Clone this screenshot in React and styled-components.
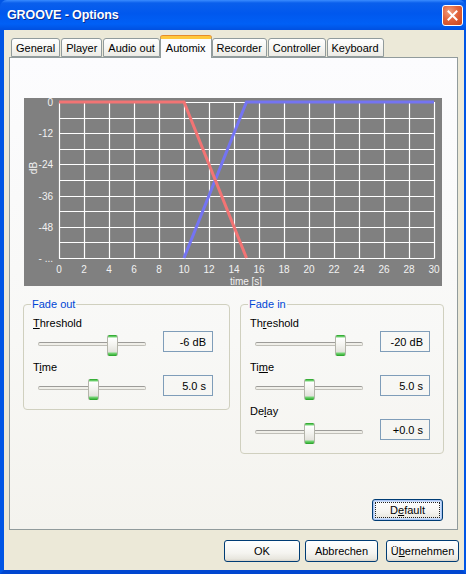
import React from "react";
import styled, { createGlobalStyle } from "styled-components";

const Global = createGlobalStyle`
  html, body { margin: 0; padding: 0; }
  body { width: 466px; height: 574px; overflow: hidden; background: #ffffff; }
  * { box-sizing: border-box; }
`;

const FONT = `"Liberation Sans", Arial, sans-serif`;

const Window = styled.div`
  width: 466px;
  height: 574px;
  display: flex;
  flex-direction: column;
  font-family: ${FONT};
  font-size: 11px;
  color: #000;
  background: #0055e5;
`;

const TitleBar = styled.div`
  height: 30px;
  flex: none;
  display: flex;
  align-items: center;
  padding: 0 3px 0 7px;
  border-radius: 7px 7px 0 0;
  background: linear-gradient(
    to bottom,
    #3a8cff 0%,
    #0a5fec 10%,
    #0058ee 45%,
    #0060f6 80%,
    #0050e0 100%
  );
`;

const Title = styled.div`
  flex: 1;
  color: #fff;
  font-weight: bold;
  font-size: 12.5px;
  letter-spacing: -0.1px;
  text-shadow: 1px 1px 0 #0a2a8c;
`;

const CloseButton = styled.div`
  width: 21px;
  height: 21px;
  border: 1px solid #fff;
  border-radius: 3px;
  background: radial-gradient(circle at 35% 30%, #f0a080 0%, #e2643c 45%, #c8441c 100%);
  display: flex;
  align-items: center;
  justify-content: center;
`;

const Frame = styled.div`
  flex: 1;
  display: flex;
  border-left: 4px solid #0055e5;
  border-right: 4px solid #0055e5;
  border-bottom: 4px solid #0046d0;
`;

const Client = styled.div`
  flex: 1;
  display: flex;
  flex-direction: column;
  background: #ece9d8;
  padding: 6px 6px 8px 5px;
`;

const TabStrip = styled.div`
  display: flex;
  align-items: flex-end;
  height: 21px;
  padding-left: 2px;
  gap: 1px;
  position: relative;
  z-index: 1;
`;

const Tab = styled.div`
  height: ${(p) => (p.$active ? "22px" : "19px")};
  margin-bottom: ${(p) => (p.$active ? "-1px" : "0")};
  margin-left: ${(p) => (p.$active ? "-1px" : "0")};
  margin-right: ${(p) => (p.$active ? "-1px" : "0")};
  padding: ${(p) => (p.$active ? "0 5px 2px" : "0 4px")};
  display: flex;
  align-items: center;
  border: 1px solid #919b9c;
  border-bottom: ${(p) => (p.$active ? "none" : "1px solid #919b9c")};
  border-top: ${(p) => (p.$active ? "3px solid #ffc83c" : "1px solid #919b9c")};
  border-radius: 3px 3px 0 0;
  background: ${(p) =>
    p.$active
      ? "#fcfcfe"
      : "linear-gradient(to bottom, #ffffff 0%, #f6f6f3 50%, #ecebe5 100%)"};
  box-shadow: ${(p) => (p.$active ? "0 -1px 0 #e68b2c" : "none")};
  white-space: nowrap;
`;

const Panel = styled.div`
  height: 473px;
  flex: none;
  display: flex;
  flex-direction: column;
  border: 1px solid #919b9c;
  background: linear-gradient(to bottom, #fcfcfe 0%, #f8f8f6 60%, #f4f3ee 100%);
  padding: 40px 13px 8px 14px;
`;

const ChartBox = styled.div`
  width: 418px;
  height: 188px;
  background: #808080;
  flex: none;
`;

const GroupsRow = styled.div`
  display: flex;
  align-items: flex-start;
  gap: 10px;
  margin: 12px 0 0 -1px;
`;

const Group = styled.fieldset`
  margin: 0;
  width: ${(p) => p.$w}px;
  border: 1px solid #d0d0bf;
  border-radius: 4px;
  padding: 6px 0 9px 9px;
  display: flex;
  flex-direction: column;
  gap: 5px;
`;

const Legend = styled.legend`
  color: #0046d5;
  padding: 0 1px;
  margin-left: -2px;
  line-height: 13px;
`;

const Control = styled.div`
  display: flex;
  flex-direction: column;
`;

const Label = styled.div`
  line-height: 13px;
  height: 13px;
`;

const SliderRow = styled.div`
  display: flex;
  align-items: flex-start;
  height: 26px;
  gap: 12px;
`;

const Slider = styled.div`
  width: 118px;
  height: 26px;
  position: relative;
  flex: none;
`;

const Track = styled.div`
  position: absolute;
  left: 5px;
  right: 5px;
  top: 12px;
  height: 4px;
  border: 1px solid #c0bfb8;
  border-top-color: #9d9c99;
  border-radius: 2px;
  background: #f0efe9;
`;

const Thumb = styled.div`
  position: absolute;
  top: 5px;
  width: 11px;
  height: 21px;
  border: 1px solid #b4b4aa;
  border-top: none;
  border-bottom: none;
  border-radius: 2px;
  background: linear-gradient(
    to bottom,
    #21a121 0px,
    #7bd87b 2px,
    #ffffff 3px,
    #f3f3ef 10px,
    #e3e2dc 17px,
    #7bd87b 18px,
    #21a121 21px
  );
`;

const ValueBox = styled.div`
  width: 50px;
  height: 21px;
  margin-top: 1px;
  flex: none;
  border: 1px solid #7f9db9;
  display: flex;
  align-items: center;
  justify-content: flex-end;
  padding-right: 6px;
  background: transparent;
`;

const Spacer = styled.div`
  flex: 1;
`;

const DefaultRow = styled.div`
  display: flex;
  justify-content: flex-end;
  padding-right: 1px;
`;

const Button = styled.div`
  width: ${(p) => p.$w}px;
  height: 22px;
  flex: none;
  margin-left: ${(p) => p.$ml || 0}px;
  position: relative;
  display: flex;
  align-items: center;
  justify-content: center;
  border: 1px solid #003c74;
  border-radius: 3px;
  background: linear-gradient(to bottom, #ffffff 0%, #f5f4f0 60%, #e8e6de 90%, #d6d0c5 100%);
  box-shadow: ${(p) =>
    p.$focus ? "inset 0 0 0 1px #aac4f2, inset 0 0 0 2px #cde0fb" : "none"};
  &::after {
    content: "";
    display: ${(p) => (p.$focus ? "block" : "none")};
    position: absolute;
    inset: 2px;
    border: 1px dotted #222;
  }
`;

const ButtonRow = styled.div`
  display: flex;
  justify-content: flex-end;
  margin: 10px -1px 0 0;
`;

function Chart() {
  const x0 = 35;
  const dx = 25;
  const y0 = 4;
  const dy = 15.6;
  const xs = Array.from({ length: 16 }, (_, i) => x0 + dx * i);
  const ys = Array.from({ length: 11 }, (_, j) => y0 + dy * j);
  const yLabels = ["0", "-12", "-24", "-36", "-48", "- ..."];
  const px = (t) => x0 + dx * (t / 2);
  return (
    <svg width="418" height="188" viewBox="0 0 418 188">
      <rect x="0" y="0" width="418" height="188" fill="#808080" />
      {xs.map((x, i) => (
        <line
          key={"v" + i}
          x1={Math.round(x) + 0.5}
          x2={Math.round(x) + 0.5}
          y1={y0}
          y2={160.5}
          stroke="#ffffff"
          strokeWidth="1.2"
        />
      ))}
      {ys.map((y, j) => (
        <line
          key={"h" + j}
          x1={x0}
          x2={410.5}
          y1={Math.round(y) + 0.5}
          y2={Math.round(y) + 0.5}
          stroke="#ffffff"
          strokeWidth="1.2"
        />
      ))}
      <polyline
        points={`${px(10)},160 ${px(15)},4 410,4`}
        fill="none"
        stroke="#7474f2"
        strokeWidth="3"
      />
      <polyline
        points={`${x0},4 ${px(10)},4 ${px(15)},160`}
        fill="none"
        stroke="#f27474"
        strokeWidth="3"
      />
      <g fill="#f2f2f2" fontFamily={FONT} fontSize="10">
        {yLabels.map((l, i) => (
          <text key={l} x="29" y={y0 + 31.2 * i + 4} textAnchor="end">
            {l}
          </text>
        ))}
        {xs.map((x, i) => (
          <text key={"xl" + i} x={x} y="175" textAnchor="middle">
            {i * 2}
          </text>
        ))}
        <text x="222" y="186.5" textAnchor="middle">
          time [s]
        </text>
        <text x="13" y="70" textAnchor="middle" transform="rotate(-90 13 70)">
          dB
        </text>
      </g>
    </svg>
  );
}

function SliderControl({ label, pos, value }) {
  return (
    <Control>
      <Label>{label}</Label>
      <SliderRow>
        <Slider>
          <Track />
          <Thumb style={{ left: 5 + pos }} />
        </Slider>
        <ValueBox>{value}</ValueBox>
      </SliderRow>
    </Control>
  );
}

const tabs = ["General", "Player", "Audio out", "Automix", "Recorder", "Controller", "Keyboard"];

export default function App() {
  return (
    <Window>
      <Global />
      <TitleBar>
        <Title>GROOVE - Options</Title>
        <CloseButton>
          <svg width="11" height="11" viewBox="0 0 11 11">
            <path d="M1.5 1.5 L9.5 9.5 M9.5 1.5 L1.5 9.5" stroke="#fff" strokeWidth="2" strokeLinecap="square" />
          </svg>
        </CloseButton>
      </TitleBar>
      <Frame>
        <Client>
          <TabStrip>
            {tabs.map((t) => (
              <Tab key={t} $active={t === "Automix"}>
                {t}
              </Tab>
            ))}
          </TabStrip>
          <Panel>
            <ChartBox>
              <Chart />
            </ChartBox>
            <GroupsRow>
              <Group $w={207}>
                <Legend>Fade out</Legend>
                <SliderControl label={<><u>T</u>hreshold</>} pos={69} value="-6 dB" />
                <SliderControl label={<>T<u>i</u>me</>} pos={50} value="5.0 s" />
              </Group>
              <Group $w={204}>
                <Legend>Fade in</Legend>
                <SliderControl label={<>Th<u>r</u>eshold</>} pos={80} value="-20 dB" />
                <SliderControl label={<>Ti<u>m</u>e</>} pos={49} value="5.0 s" />
                <SliderControl label={<>De<u>l</u>ay</>} pos={49} value="+0.0 s" />
              </Group>
            </GroupsRow>
            <Spacer />
            <DefaultRow>
              <Button $w={71} $focus>
                D<u>e</u>fault
              </Button>
            </DefaultRow>
          </Panel>
          <ButtonRow>
            <Button $w={76}>OK</Button>
            <Button $w={73} $ml={5}>Abbrechen</Button>
            <Button $w={73} $ml={8}>
              Ü<u>b</u>ernehmen
            </Button>
          </ButtonRow>
        </Client>
      </Frame>
    </Window>
  );
}
